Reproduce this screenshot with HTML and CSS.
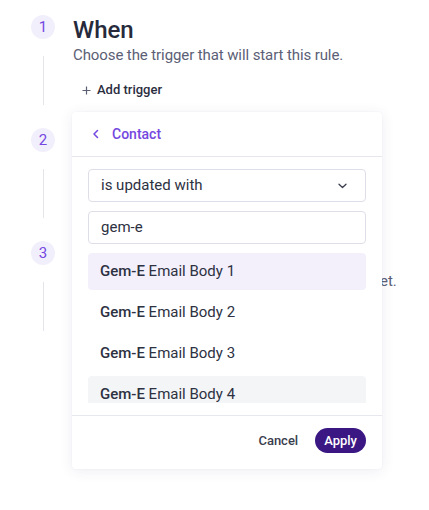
FILE: index.html
```html
<!DOCTYPE html>
<html lang="en">
<head>
<meta charset="utf-8">
<title>Rule builder</title>
<link rel="stylesheet" href="styles.css">
</head>
<body>
<div class="page">
  <div class="steps">
    <div class="step">
      <div class="rail"><div class="num">1</div><div class="line"></div></div>
      <div class="content">
        <h2 class="title">When</h2>
        <p class="sub">Choose the trigger that will start this rule.</p>
        <button class="add" type="button">
          <svg class="plus" width="9" height="9" viewBox="0 0 9 9"><path d="M4.5 0.5v8M0.5 4.5h8" stroke="#5b6074" stroke-width="1.2" fill="none"/></svg>
          <span>Add trigger</span>
        </button>
      </div>
    </div>
    <div class="step">
      <div class="rail"><div class="num">2</div><div class="line"></div></div>
      <div class="content">
        <h2 class="title">If</h2>
        <p class="sub">Add conditions to narrow the rule.</p>
      </div>
    </div>
    <div class="step">
      <div class="rail"><div class="num">3</div><div class="line"></div></div>
      <div class="content">
        <h2 class="title">Then</h2>
        <p class="sub">Choose the action that runs if conditions are met.</p>
      </div>
    </div>
  </div>

  <div class="popover">
    <div class="pop-head">
      <svg class="back" width="10" height="10" viewBox="0 0 10 10"><path d="M6.5 1.5L3 5l3.5 3.5" stroke="#7447e0" stroke-width="1.5" fill="none" stroke-linecap="round" stroke-linejoin="round"/></svg>
      <span class="pop-title">Contact</span>
    </div>
    <div class="pop-body">
      <div class="field select">
        <span>is updated with</span>
        <svg class="chev" width="9" height="6" viewBox="0 0 9 6"><path d="M1 1.2l3.5 3.3L8 1.2" stroke="#3a3d4e" stroke-width="1.3" fill="none" stroke-linecap="round" stroke-linejoin="round"/></svg>
      </div>
      <div class="field input">gem-e</div>
      <div class="list">
        <div class="opt opt-active"><b>Gem-E</b> Email Body 1</div>
        <div class="opt"><b>Gem-E</b> Email Body 2</div>
        <div class="opt"><b>Gem-E</b> Email Body 3</div>
        <div class="opt opt-hover"><b>Gem-E</b> Email Body 4</div>
      </div>
    </div>
    <div class="pop-foot">
      <button class="cancel" type="button">Cancel</button>
      <button class="apply" type="button">Apply</button>
    </div>
  </div>
</div>
</body>
</html>
```

FILE: styles.css
```css
* { box-sizing: border-box; }
html, body { margin: 0; padding: 0; background: #ffffff; }
body { font-family: Roboto, "Noto Sans", sans-serif; color: #272a3a; }

.page { position: relative; width: 429px; height: 510px; overflow: hidden; }

.steps { padding: 15px 0 0 31px; display: flex; flex-direction: column; gap: 23px; }

.step { display: grid; grid-template-columns: 24px 1fr; column-gap: 18px; }

.rail { display: flex; flex-direction: column; align-items: center; height: 90px; }
.num {
  width: 24px; height: 24px; border-radius: 50%;
  background: #f2effd; color: #7447e0;
  font-size: 15px; line-height: 24px; text-align: center;
}
.line { width: 1px; height: 49px; margin-top: 17px; background: #e4e4ea; }

.content { min-width: 0; }
.title { margin: 0; font-size: 24px; line-height: 28px; font-weight: 500; color: #262a3b; padding-top: 1px; }
.sub { margin: 0; font-size: 15px; line-height: 22px; color: #5b6076; white-space: nowrap; letter-spacing: -0.1px; }

.add {
  display: flex; align-items: center; gap: 6px;
  margin: 14px 0 0 9px; padding: 0; border: 0; background: none;
  font-family: inherit; font-size: 13px; font-weight: 500; line-height: 20px; color: #2b2e3f;
}
.plus { display: block; }

.popover {
  position: absolute; left: 72px; top: 112px; width: 310px;
  background: #ffffff; border-radius: 4px;
  box-shadow: 0 2px 14px rgba(50, 50, 120, 0.09), 0 0 2px rgba(50, 50, 120, 0.05);
}
.pop-head {
  height: 45px; display: flex; align-items: center; padding-left: 19px; gap: 11px;
  border-bottom: 1px solid #e7e7ef;
}
.back { display: block; }
.pop-title { font-size: 14px; font-weight: 500; color: #7447e0; }

.pop-body { padding: 12px 16px 12px; display: flex; flex-direction: column; gap: 9px; }
.field {
  height: 33px; border: 1px solid #dedee8; border-radius: 4px;
  padding: 0 12px; font-size: 15px; line-height: 31px; color: #2d3142;
}
.select { display: flex; align-items: center; justify-content: space-between; padding-right: 18px; }
.chev { display: block; }

.list { height: 150px; overflow: hidden; display: flex; flex-direction: column; gap: 4px; }
.opt {
  flex: 0 0 37px; height: 37px; border-radius: 4px; padding: 0 12px;
  font-size: 15px; line-height: 37px; color: #2d3142;
}
.opt b { font-weight: 500; }
.opt-active { background: #f3f0fc; }
.opt-hover { background: #f4f5f7; }

.pop-foot {
  border-top: 1px solid #e7e7ef; padding: 12px 16px 16px;
  display: flex; justify-content: flex-end; align-items: center; gap: 17px;
}
.cancel {
  border: 0; background: none; padding: 0; font-family: inherit;
  font-size: 13px; font-weight: 500; color: #3a3d4e;
}
.apply {
  height: 25px; padding: 0 9px; border: 0; border-radius: 13px;
  background: #3b1784; color: #ffffff; font-family: inherit;
  font-size: 13px; font-weight: 500;
}
```
